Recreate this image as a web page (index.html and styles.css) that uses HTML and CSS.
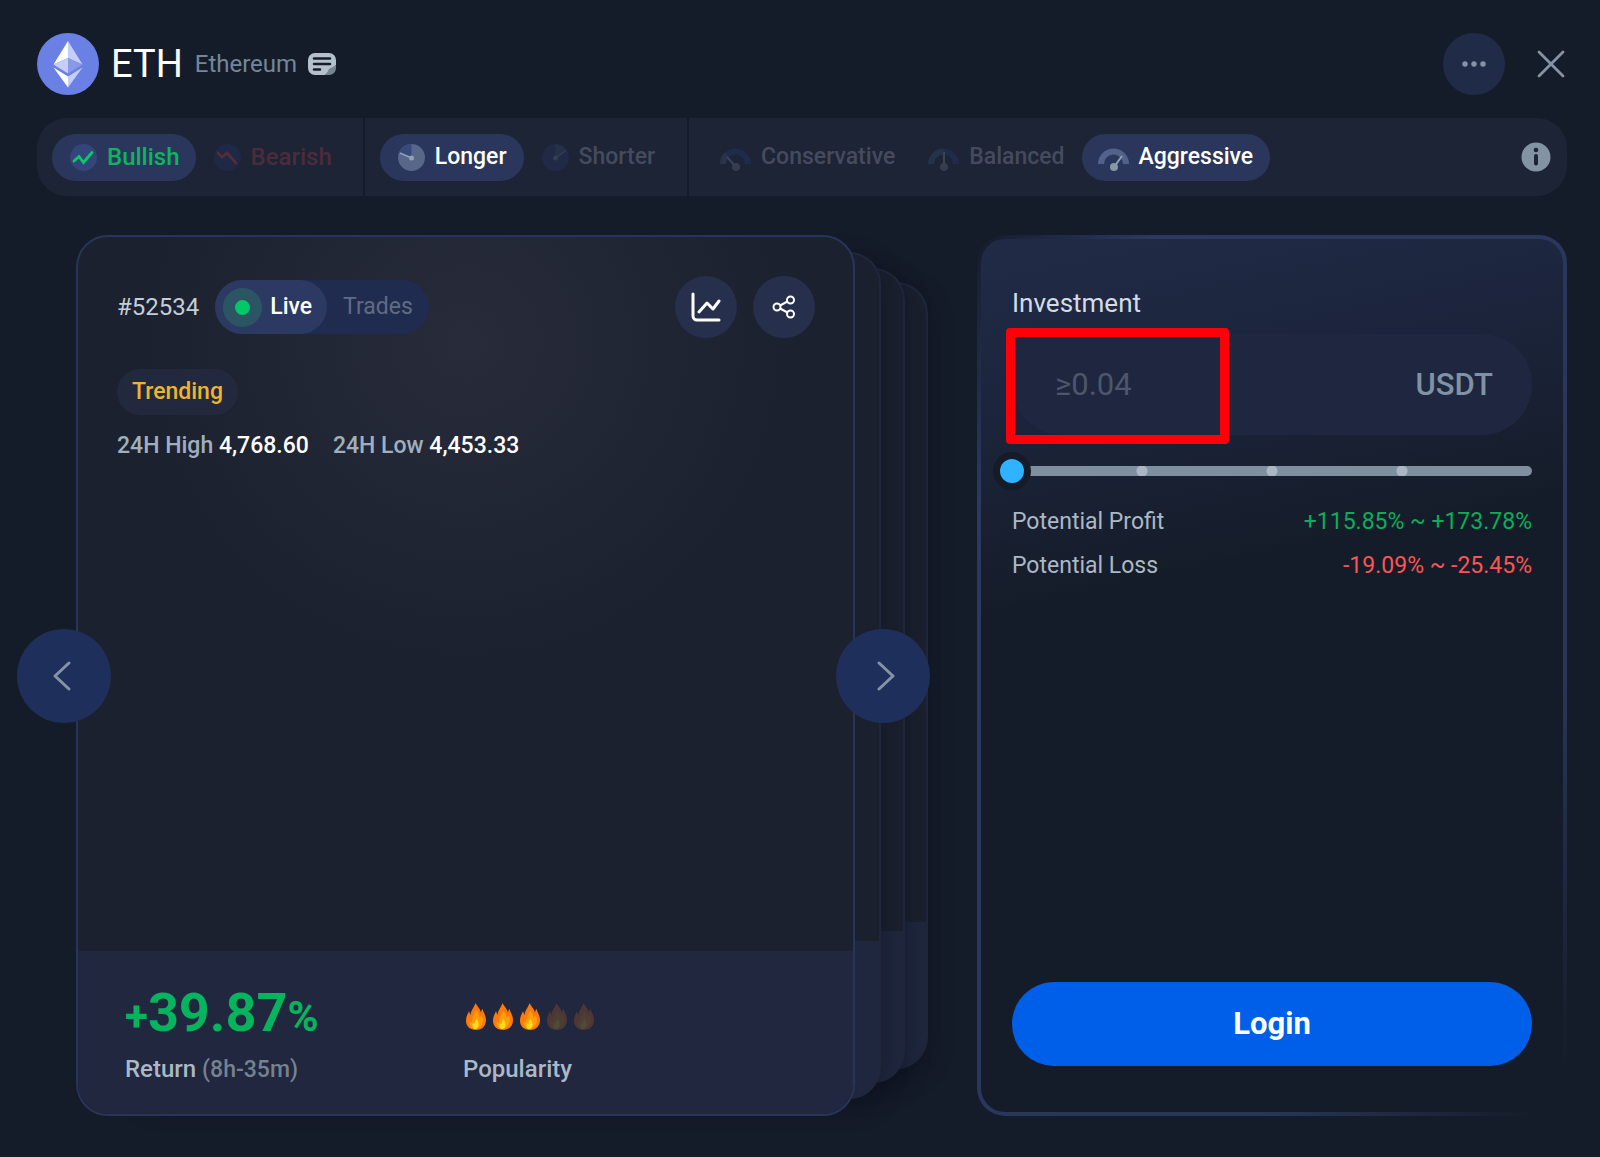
FILE: index.html
```html
<!DOCTYPE html>
<html lang="en">
<head>
  <meta charset="UTF-8" />
  <meta name="viewport" content="width=device-width, initial-scale=1.0"/>
  <title>ETH - Ethereum</title>
  <link rel="stylesheet" href="styles.css">
</head>
<body>

  <!-- flame shape, reused by the popularity rating -->
  <svg class="defs" width="0" height="0" aria-hidden="true">
    <symbol id="flame" viewBox="0 0 20 27">
      <path fill="#ff7a0a" d="M9.500 0C11 3 14.500 6 15 10C15 8.500 15.500 7 16.500 6C17 9 20 12 20 17C20 23 16 27 10 27C4 27 0 23 0 18C0 13 2 11 3 8C3.500 9.500 4 11 4.500 12C5 7 8.500 4 9.500 0Z"/>
      <path fill="#ff9d0c" d="M10 7C11.500 10 13.500 12 13.500 15C14.500 14.500 15 13 15 12C17 14.500 17.500 17 16.500 20C15 24 12 25.500 9 25.500C5 25.500 3 22 3.500 18C4 19 5 19.500 6 19C5.500 14 9.500 11 10 7Z"/>
      <path fill="#ffde17" d="M10.500 16C12 18 13 20 12.500 23C12 25 11 26 9 26C6.500 26 6 23 7 20C7.500 20.500 8 21 8.500 21C8.500 19 9.500 17.500 10.500 16Z"/>
    </symbol>
  </svg>

  <header class="header">
    <svg class="logo" viewBox="0 0 62 62" aria-hidden="true">
      <circle cx="31" cy="31" r="31" fill="#6a80e4"/>
      <path fill="#fff" d="M31 8v17L16.500 31.500z"/>
      <path fill="#c5cef6" d="M31 8l14.500 23.500L31 25z"/>
      <path fill="#c5cef6" d="M31 25v15.500l-14.500-9z"/>
      <path fill="#8899ea" d="M31 25l14.500 6.500L31 40.500z"/>
      <path fill="#fff" d="M31 43.500V54.500L16.500 34.500z"/>
      <path fill="#c5cef6" d="M31 43.500V54.500L45.500 34.500z"/>
    </svg>
    <h1>ETH</h1>
    <span class="coin-name">Ethereum</span>
    <button class="note-btn" aria-label="Notes">
      <svg width="28" height="22" viewBox="0 0 28 22">
        <path fill="#b4c0ca" d="M7 0h14a7 7 0 0 1 7 7v5L17 22H7a7 7 0 0 1-7-7V7a7 7 0 0 1 7-7z"/>
        <path fill="#77858f" d="M28 12v3a7 7 0 0 1-7 7h-4c2-1 2-2 3-4c1-3 3-3 5-4z"/>
        <path stroke="#151c29" stroke-width="2.500" stroke-linecap="round" d="M6 5.500h16M6 11h16M6 16.500h6"/>
      </svg>
    </button>
    <button class="round-btn more" aria-label="More">
      <svg width="24" height="6" viewBox="0 0 24 6" fill="#8494a5"><circle cx="3" cy="3" r="2.700"/><circle cx="12" cy="3" r="2.700"/><circle cx="21" cy="3" r="2.700"/></svg>
    </button>
    <button class="close" aria-label="Close">
      <svg width="28" height="28" viewBox="0 0 28 28" stroke="#8494a5" stroke-width="2.800" stroke-linecap="round"><path d="M2 2l24 24M26 2L2 26"/></svg>
    </button>
  </header>

  <nav class="filters" aria-label="Strategy filters">
    <div class="group direction">
      <button class="pill active bull">
        <svg width="27" height="27" viewBox="0 0 27 27" fill="none"><circle cx="13.500" cy="13.500" r="13.500" fill="#34457a"/><path d="M4 17l5-4.500 4.500 6L22 8.500" stroke="#08ca6a" stroke-width="2.800" stroke-linecap="round"/></svg>
        Bullish
      </button>
      <button class="pill bear">
        <svg width="27" height="27" viewBox="0 0 27 27" fill="none"><circle cx="13.500" cy="13.500" r="13.500" fill="#1f2946"/><path d="M4 9l4 4 5-4 9 10" stroke="#542c3b" stroke-width="2.800" stroke-linecap="round"/></svg>
        Bearish
      </button>
    </div>
    <div class="group">
      <button class="pill active">
        <svg width="27" height="27" viewBox="0 0 27 27"><circle cx="13.500" cy="13.500" r="13.500" fill="#576789"/><path fill="#384a7c" d="M13.500 13.500V0A13.500 13.500 0 0 0 1 8.500z"/><path stroke="#91a0b3" stroke-width="1.500" d="M13.500 14L2 9"/><circle cx="13.500" cy="14" r="2.500" fill="#91a0b3"/></svg>
        Longer
      </button>
      <button class="pill">
        <svg width="27" height="27" viewBox="0 0 27 27"><circle cx="13.500" cy="13.500" r="13.500" fill="#202a47"/><path fill="#263149" d="M13.500 13.500V0A13.500 13.500 0 0 1 24 6z"/><path stroke="#343e50" stroke-width="1.500" d="M13.500 14L24 6.500"/><circle cx="13.500" cy="14" r="2.500" fill="#343e50"/></svg>
        Shorter
      </button>
    </div>
    <div class="group risk">
      <button class="pill">
        <svg width="31" height="27" viewBox="0 0 31 27" fill="none"><path d="M3 20a12.500 12.500 0 0 1 25 0" stroke="#1f2b49" stroke-width="6"/><path d="M3 20a12.500 12.500 0 0 1 4-9.500" stroke="#293449" stroke-width="6"/><path d="M16 23L7 13" stroke="#3a4455" stroke-width="2"/><circle cx="16" cy="23" r="4" fill="#343e50"/></svg>
        Conservative
      </button>
      <button class="pill">
        <svg width="31" height="27" viewBox="0 0 31 27" fill="none"><path d="M3 20a12.500 12.500 0 0 1 25 0" stroke="#1f2b49" stroke-width="6"/><path d="M3 20a12.500 12.500 0 0 1 12.500-12.500" stroke="#263247" stroke-width="6"/><path d="M16 23V8" stroke="#3a4455" stroke-width="2"/><circle cx="16" cy="23" r="4" fill="#343e50"/></svg>
        Balanced
      </button>
      <button class="pill active">
        <svg width="31" height="27" viewBox="0 0 31 27" fill="none"><path d="M3 20a12.500 12.500 0 0 1 25 0" stroke="#52628a" stroke-width="6"/><path d="M16 23l8-11" stroke="#91a3b0" stroke-width="2"/><circle cx="16" cy="23" r="4" fill="#8498a5"/></svg>
        Aggressive
      </button>
    </div>
    <button class="info" aria-label="Info">
      <svg width="30" height="30" viewBox="0 0 30 30"><circle cx="15" cy="15" r="14.500" fill="#8293a3"/><circle cx="15" cy="8" r="2.300" fill="#1b2335"/><path d="M15 14v7.500" stroke="#1b2335" stroke-width="4" stroke-linecap="round"/></svg>
    </button>
  </nav>

  <main class="content">
    <section class="deck">
      <div class="back back3"></div>
      <div class="back back2"></div>
      <div class="back back1"></div>

      <article class="card">
        <div class="card-body">
          <div class="card-top">
            <span class="card-id">#52534</span>
            <div class="tabs">
              <button class="tab active"><span class="live-dot"></span>Live</button>
              <button class="tab">Trades</button>
            </div>
            <div class="actions">
              <button class="round-btn" aria-label="Chart">
                <svg width="30" height="30" viewBox="0 0 30 30" fill="none" stroke="#fff" stroke-width="3" stroke-linecap="round" stroke-linejoin="round"><path d="M2 2v22a4 4 0 0 0 4 4h22"/><path d="M8 20l8-9 6 6 6-8"/></svg>
              </button>
              <button class="round-btn" aria-label="Share">
                <svg width="24" height="24" viewBox="0 0 24 24" fill="none" stroke="#fff" stroke-width="2"><circle cx="5" cy="12" r="3.500"/><circle cx="18.500" cy="5" r="3.500"/><circle cx="18.500" cy="19" r="3.500"/><path d="M8 10.500l7.500-4M8 13.500l7.500 4"/></svg>
              </button>
            </div>
          </div>
          <span class="tag">Trending</span>
          <div class="stats">
            <p>24H High <b>4,768.60</b></p>
            <p>24H Low <b>4,453.33</b></p>
          </div>
        </div>
        <footer class="card-footer">
          <div class="return">
            <div class="big"><small>+</small>39.87<small>%</small></div>
            <p>Return <span>(8h-35m)</span></p>
          </div>
          <div class="popularity">
            <div class="flames" role="img" aria-label="3 out of 5">
              <svg><use href="#flame"/></svg>
              <svg><use href="#flame"/></svg>
              <svg><use href="#flame"/></svg>
              <svg class="off"><use href="#flame"/></svg>
              <svg class="off"><use href="#flame"/></svg>
            </div>
            <p>Popularity</p>
          </div>
        </footer>
      </article>

      <button class="arrow prev" aria-label="Previous">
        <svg width="24" height="32" viewBox="0 0 24 32"><path d="M17 3L3 16l14 13"/></svg>
      </button>
      <button class="arrow next" aria-label="Next">
        <svg width="24" height="32" viewBox="0 0 24 32"><path d="M8 3l14 13L8 29"/></svg>
      </button>
    </section>

    <form class="panel">
      <label class="panel-label" for="amount">Investment</label>
      <div class="amount">
        <input type="text" id="amount" placeholder="≥0.04" />
        <span>USDT</span>
        <div class="highlight"></div>
      </div>
      <div class="slider">
        <input type="range" min="0" max="100" value="0" aria-label="Investment percent" />
      </div>
      <dl class="potential">
        <dt>Potential Profit</dt>
        <dd class="profit">+115.85% ~ +173.78%</dd>
        <dt>Potential Loss</dt>
        <dd class="loss">-19.09% ~ -25.45%</dd>
      </dl>
      <button type="button" class="login">Login</button>
    </form>
  </main>

</body>
</html>
```
FILE: styles.css
```css
* {
  box-sizing: border-box;
}

body {
  margin: 0;
  min-height: 100vh;
  padding: 33px 33px 41px 37px;
  display: flex;
  flex-direction: column;
  background: #151c29;
  color: #abb8c5;
  font-family: Roboto, sans-serif;
  font-size: 23px;
  line-height: 28px;
}

button,
input {
  font: inherit;
  color: inherit;
  border: none;
  padding: 0;
  background: none;
}

button {
  cursor: pointer;
}

svg {
  display: block;
}

p,
dl,
dd {
  margin: 0;
}

.defs {
  position: absolute;
}

/* header */
.header {
  display: flex;
  align-items: center;
  height: 62px;
  padding-right: 2px;
}

.logo {
  width: 62px;
  height: 62px;
}

h1 {
  margin: 0 12px;
  color: #fff;
  font-size: 38px;
  font-weight: 400;
  line-height: 48px;
}

.coin-name {
  color: #74879a;
  font-size: 24px;
}

.note-btn {
  margin-left: 11px;
}

.round-btn {
  width: 62px;
  height: 62px;
  border-radius: 50%;
  background: #262f4c;
  display: flex;
  align-items: center;
  justify-content: center;
}

.more {
  margin-left: auto;
  background: #202b48;
}

.close {
  margin-left: 32px;
}

/* filter bar */
.filters {
  display: flex;
  align-items: center;
  margin-top: 23px;
  height: 78px;
  border-radius: 30px;
  background: #1c2436;
}

.group {
  display: flex;
  align-items: center;
  height: 100%;
  padding: 0 15px;
  border-right: 2px solid #151c29;
}

.group.direction {
  font-size: 24px;
}

.group.risk {
  border-right: none;
}

.pill {
  display: flex;
  align-items: center;
  gap: 10px;
  height: 47px;
  padding: 0 17px 0 18px;
  border-radius: 24px;
  color: #454b5d;
  font-weight: 500;
}

.direction .pill {
  padding-right: 16px;
}

.risk .pill {
  padding-left: 16px;
}

.pill.active {
  background: #2a365c;
  color: #fff;
}

.pill.bull {
  color: #0fb45e;
}

.pill.bear {
  color: #4b2c3b;
}

.info {
  margin: 0 16px 0 auto;
}

/* main area */
.content {
  flex: 1;
  display: grid;
  grid-template-columns: minmax(0, 779fr) minmax(0, 590fr);
  gap: 122px;
  margin: 39px 0 0 39px;
}

.deck {
  position: relative;
  display: flex;
}

.card {
  position: relative;
  flex: 1;
  display: flex;
  flex-direction: column;
  border: 2px solid #28355a;
  border-radius: 32px;
  overflow: hidden;
  background: radial-gradient(circle at 50% 12%, #272b3a, #1c2130 320px);
}

/* cards peeking out behind the current one */
.back {
  position: absolute;
  left: 60px;
  border: 2px solid #20273c;
  border-radius: 32px;
  background: #1b202e linear-gradient(#1f273e, #1f273e) no-repeat bottom;
  box-shadow: 0 8px 24px rgba(8, 12, 22, 0.4);
}

.back1 {
  top: 17px;
  bottom: 17px;
  right: -26px;
  background-size: 100% 156px;
}

.back2 {
  top: 33px;
  bottom: 33px;
  right: -50px;
  background-size: 100% 150px;
}

.back3 {
  top: 47px;
  bottom: 47px;
  right: -73px;
  background-size: 100% 145px;
}

.card-body {
  flex: 1;
  padding: 39px 38px 39px 39px;
}

.card-top {
  display: flex;
  align-items: center;
  margin-bottom: 31px;
}

.card-id {
  color: #c3ced9;
  font-size: 24px;
}

.tabs {
  display: flex;
  margin-left: 16px;
  border-radius: 27px;
  background: #202c4f;
}

.tab {
  display: flex;
  align-items: center;
  height: 54px;
  padding: 0 16px;
  border-radius: 27px;
  color: #616b84;
}

.tab.active {
  gap: 8px;
  padding: 0 15px 0 8px;
  background: #2c3962;
  color: #fff;
  font-weight: 500;
}

.live-dot {
  width: 39px;
  height: 39px;
  border-radius: 50%;
  border: 12px solid #2c5564;
  background: #02c868;
}

.actions {
  display: flex;
  gap: 16px;
  margin-left: auto;
}

.tag {
  display: inline-flex;
  align-items: center;
  height: 46px;
  padding: 0 15px;
  border-radius: 23px;
  background: #22283d;
  color: #eeb42f;
  font-weight: 500;
}

.stats {
  display: flex;
  gap: 24px;
  margin-top: 17px;
  font-weight: 500;
  color: #a0afbe;
}

.stats b {
  color: #fff;
  font-weight: 500;
}

.card-footer {
  display: grid;
  grid-template-columns: 338px 1fr;
  height: 163px;
  padding: 30px 47px;
  background: #20273f;
  font-size: 24px;
  font-weight: 500;
}

.return span {
  color: #75828f;
  font-size: 23px;
}

.big {
  height: 64px;
  margin-bottom: 10px;
  color: #05b45d;
  font-size: 54px;
  font-weight: 700;
  line-height: 64px;
}

.big small {
  font-size: 42px;
}

.flames {
  display: flex;
  align-items: center;
  gap: 7px;
  height: 64px;
  margin: 0 0 10px 3px;
  padding-top: 6px;
}

.flames svg {
  width: 20px;
  height: 27px;
}

.flames .off {
  opacity: 0.2;
}

.arrow {
  position: absolute;
  top: calc(50% - 47px);
  width: 94px;
  height: 94px;
  border-radius: 50%;
  background: #1f2f5b;
  display: flex;
  align-items: center;
  justify-content: center;
}

.arrow path {
  fill: none;
  stroke: #8494a5;
  stroke-width: 3;
  stroke-linecap: round;
  stroke-linejoin: round;
}

.prev {
  left: -59px;
}

.next {
  right: -75px;
}

/* investment panel */
.panel {
  display: flex;
  flex-direction: column;
  padding: 50px 31px 46px;
  border: 4px solid transparent;
  border-radius: 28px;
  background:
    linear-gradient(168deg, #202b46, #1d263f 14%, #151c29 38%) padding-box,
    linear-gradient(to bottom right, #151c29, #2b3963 15%, #293559 75%, #151c29 97%) border-box;
}

.panel-label {
  color: #d3dce5;
  font-size: 26px;
}

.amount {
  position: relative;
  display: flex;
  align-items: center;
  height: 101px;
  margin-top: 17px;
  padding: 0 39px 0 43px;
  border-radius: 50px;
  background: #1f2640;
  font-size: 31px;
}

.amount input {
  flex: 1;
  min-width: 0;
  outline: none;
}

.amount input::placeholder {
  color: #4c576b;
  opacity: 1;
}

.amount span {
  color: #8092a3;
  font-weight: 500;
}

.highlight {
  position: absolute;
  top: -6px;
  left: -6px;
  width: 223px;
  height: 116px;
  border: 9px solid #ff0008;
  border-radius: 4px;
  pointer-events: none;
}

.slider {
  display: flex;
  align-items: center;
  height: 10px;
  margin-top: 31px;
  border-radius: 5px;
  background:
    radial-gradient(circle at 25% 50%, #abb7c4 5px, transparent 6px),
    radial-gradient(circle at 50% 50%, #abb7c4 5px, transparent 6px),
    radial-gradient(circle at 75% 50%, #abb7c4 5px, transparent 6px),
    #7e909f;
}

.slider input {
  appearance: none;
  flex: 1;
  height: 24px;
  margin: 0 -12px;
}

.slider input::-webkit-slider-thumb {
  appearance: none;
  width: 24px;
  height: 24px;
  border-radius: 50%;
  background: #2fb2ff;
  box-shadow: 0 0 0 7px #151b28;
}

.potential {
  display: grid;
  grid-template-columns: auto auto;
  row-gap: 16px;
  margin-top: 32px;
}

.potential dd {
  text-align: right;
}

.profit {
  color: #0bae5b;
}

.loss {
  color: #fb5454;
}

.login {
  height: 84px;
  margin-top: auto;
  border-radius: 42px;
  background: #005fe8;
  color: #fff;
  font-size: 31px;
  font-weight: 700;
}
```
